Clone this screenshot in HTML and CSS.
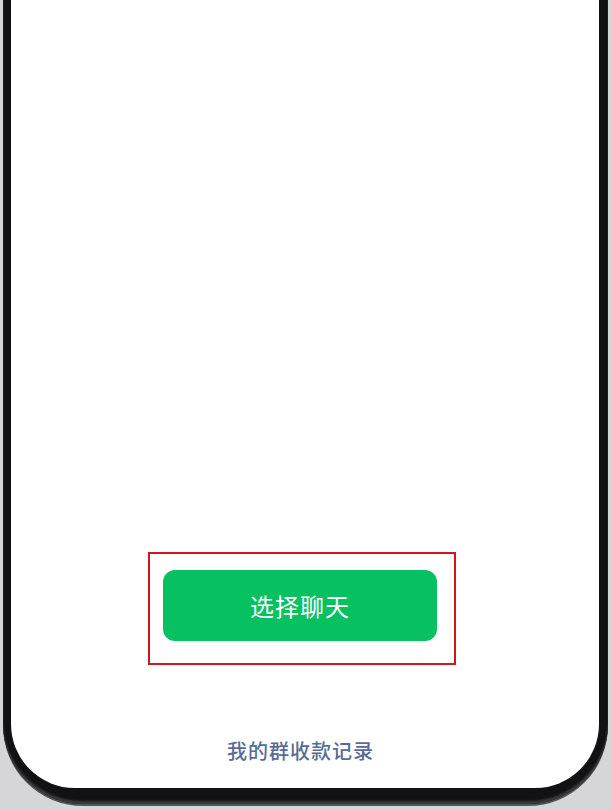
FILE: index.html
```html
<!DOCTYPE html>
<html lang="zh-CN">
<head>
  <meta charset="UTF-8" />
  <meta name="viewport" content="width=device-width, initial-scale=1.0">
  <title>群收款</title>
  <link rel="stylesheet" href="styles.css">
</head>
<body>
  <div class="phone">
    <div class="screen">
      <div class="spacer"></div>
      <div class="highlight">
        <button class="pick-btn">选择聊天</button>
      </div>
      <a class="records" href="#">我的群收款记录</a>
    </div>
  </div>
</body>
</html>
```

FILE: styles.css
```css
html, body { margin:0; padding:0; }
body { background:#d6d6d8; width:612px; height:810px; overflow:hidden; padding:0 4px 0 3px; box-sizing:border-box; font-family:"Noto Sans CJK SC", "Noto Sans", sans-serif; }
.phone { background:#121214; height:804px; padding:0 9px 16px 8px; box-sizing:border-box; border-radius:0 0 80px 80px; box-shadow:0 2px 0 #555, inset 0 -3px 2px #3a3a3c; }
.screen { background:#fff; height:788px; border-radius:0 0 64px 64px; display:flex; flex-direction:column; align-items:flex-start; }
.spacer { height:552px; flex:none; }
.highlight { margin-left:137px; width:308px; height:113px; box-sizing:border-box; border:2px solid #d2161e; padding:16px 0 0 13px; }
.pick-btn { width:274px; height:71px; border:none; border-radius:12px; background:#07c160; color:#fff; font-family:inherit; font-size:24px; letter-spacing:1px; padding:0; cursor:pointer; }
.records { margin:72px 0 0 216px; font-size:20px; line-height:28px; letter-spacing:1px; color:#576b95; font-weight:500; text-decoration:none; }
```
